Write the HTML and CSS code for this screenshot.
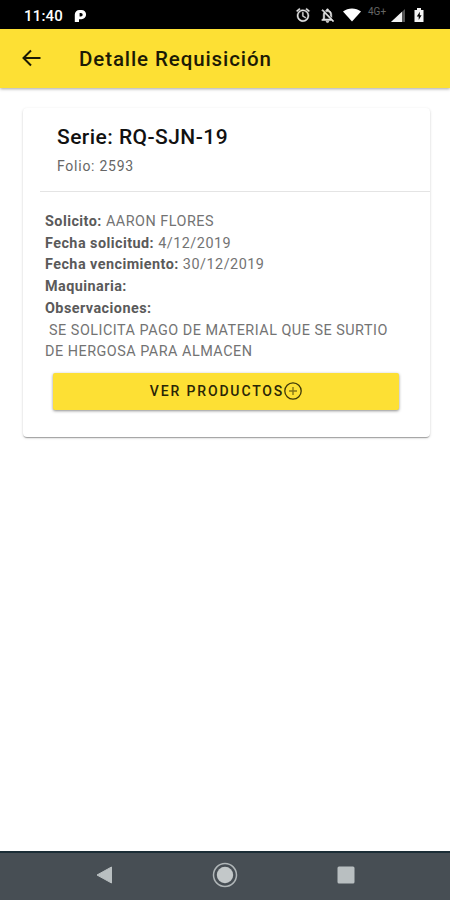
FILE: index.html
```html
<!DOCTYPE html>
<html lang="es">
<head>
  <meta charset="UTF-8" />
  <meta name="viewport" content="width=device-width, initial-scale=1.0" />
  <title>Detalle Requisición</title>
  <link rel="stylesheet" href="styles.css">
</head>
<body>
  <div class="statusbar">
    <span class="clock">11:40</span>
    <svg class="app-icon" width="13" height="14" viewBox="0 0 13 14">
      <path fill="#fff" fill-rule="evenodd" d="M5.500 1h2a4.600 4.600 0 0 1 0 9.200H5V13H.8V5.500A4.600 4.600 0 0 1 5.500 1zM5.600 4v3.600h1.300a1.800 1.800 0 0 0 0-3.600z"/>
    </svg>
    <div class="status-icons">
      <svg class="alarm" width="16" height="16" viewBox="0 0 24 24" fill="#e4e4e4" stroke="#e4e4e4" stroke-width=".6">
        <path d="M22 5.720l-4.600-3.860-1.290 1.530 4.600 3.860L22 5.720zM7.880 3.390 6.600 1.860 2 5.710l1.290 1.530 4.590-3.850zM12.500 8H11v6l4.750 2.850.75-1.230-4-2.370V8zM12 4c-4.970 0-9 4.030-9 9s4.020 9 9 9a9 9 0 1 0 0-18zm0 16c-3.870 0-7-3.130-7-7s3.130-7 7-7 7 3.130 7 7-3.130 7-7 7z"/>
      </svg>
      <svg class="bell" width="17" height="17" viewBox="0 0 24 24" fill="#e4e4e4" stroke="#e4e4e4" stroke-width=".8">
        <path d="M20 18.690 7.840 6.140 5.270 3.490 4 4.760l2.800 2.800v.01c-.52.990-.8 2.160-.8 3.420v5l-2 2v1h13.730l2 2L21 19.720l-1-1.030zM12 22c1.110 0 2-.89 2-2h-4c0 1.110.89 2 2 2zM8 17v-6c0-.7.100-1.300.3-1.900L16 17H8zm10-2.320V11c0-3.080-1.640-5.640-4.500-6.320V4a1.500 1.500 0 0 0-3 0v.68c-.6.140-1.150.36-1.640.64l1.500 1.500C13.600 5.500 16 8 16 11v1.680l2 2z"/>
      </svg>
      <svg class="wifi" width="18" height="14" viewBox="0 0 18 14">
        <path fill="#fff" d="M0 3.500C5.200-.6 12.800-.6 18 3.500L9 13.500z"/>
      </svg>
      <span class="network">4G+</span>
      <svg class="signal" width="14" height="13" viewBox="0 0 14 13">
        <path fill="#555" d="M0 13 14 0v13z"/>
        <path fill="#f2f2f2" d="M0 13 11 2.800V13z"/>
      </svg>
      <svg class="battery" width="10" height="14" viewBox="0 0 10 14">
        <path fill="#f5f5f5" d="M3 0h4v2h2.500v12h-9V2H3z"/>
        <path fill="#000" d="M5.800 3.800 2.800 8.500h1.900v3.400l2.900-4.700H5.800z"/>
      </svg>
    </div>
  </div>

  <div class="toolbar">
    <svg class="back" width="20" height="18" viewBox="0 0 20 18" fill="none" stroke="#1c1a05" stroke-width="2">
      <path d="M19.500 9H2.500M10 1.500 2.500 9l7.500 7.500"/>
    </svg>
    <h1 class="title">Detalle Requisición</h1>
  </div>

  <div class="content">
    <div class="card">
      <div class="card-header">
        <h2 class="serie">Serie: RQ-SJN-19</h2>
        <p class="folio">Folio: 2593</p>
      </div>
      <div class="card-body">
        <p><b>Solicito:</b> AARON FLORES</p>
        <p><b>Fecha solicitud:</b> 4/12/2019</p>
        <p><b>Fecha vencimiento:</b> 30/12/2019</p>
        <p><b>Maquinaria:</b></p>
        <p><b>Observaciones:</b></p>
        <p>&nbsp;SE SOLICITA PAGO DE MATERIAL QUE SE SURTIO<br>DE HERGOSA PARA ALMACEN</p>
        <button class="btn">
          <span>VER PRODUCTOS</span>
          <svg width="18" height="18" viewBox="0 0 18 18" fill="none" stroke="#3f3909">
            <circle cx="9" cy="9" r="8.200" stroke-width="1.300"/>
            <path stroke="#857718" stroke-width="1.400" d="M9 5v8M5 9h8"/>
          </svg>
        </button>
      </div>
    </div>
  </div>

  <div class="navbar">
    <svg width="17" height="18" viewBox="0 0 17 18">
      <path fill="#b9bfc1" stroke="#b9bfc1" stroke-linejoin="round" d="M1 9 15.500 1v16z"/>
    </svg>
    <svg width="26" height="26" viewBox="0 0 26 26">
      <circle cx="13" cy="13" r="11.500" fill="none" stroke="#b0b6b8" stroke-width="1.500"/>
      <circle cx="13" cy="13" r="8.200" fill="#c3c8c9"/>
    </svg>
    <svg width="18" height="18" viewBox="0 0 18 18">
      <rect x=".5" y=".5" width="17" height="17" rx="1.500" fill="#b9bfc1"/>
    </svg>
  </div>
</body>
</html>
```

FILE: styles.css
```css
* {
  box-sizing: border-box;
}

body {
  margin: 0;
  height: 900px;
  display: flex;
  flex-direction: column;
  font-family: Roboto, sans-serif;
  background-color: #fff;
}

h1, h2, p {
  margin: 0;
}

.statusbar {
  height: 29px;
  flex: none;
  display: flex;
  align-items: center;
  padding: 2px 26px 0 24px;
  background-color: #000;
  color: #fff;
}

.clock {
  width: 50px;
  font-size: 15px;
  font-weight: 500;
  letter-spacing: 0.2px;
}

.status-icons {
  display: flex;
  align-items: center;
  margin-left: auto;
}

.alarm, .bell {
  margin-top: -1px;
}

.bell {
  margin-left: 8px;
}

.wifi {
  margin-top: -2px;
  margin-left: 7px;
}

.network {
  width: 19px;
  margin: -7px 4px 0 7px;
  font-size: 10px;
  line-height: 12px;
  color: #666;
}

.battery {
  margin-top: -1px;
  margin-left: 9px;
}

.toolbar {
  height: 59px;
  flex: none;
  display: flex;
  align-items: center;
  padding-left: 21px;
  background-color: #fde034;
  box-shadow: 0 1px 3px rgba(0, 0, 0, 0.35);
}

.back {
  margin-top: -1px;
}

.title {
  margin-left: 38px;
  font-size: 20.500px;
  font-weight: 500;
  letter-spacing: 0.900px;
  color: #1c1a05;
}

.content {
  flex: 1;
  padding: 20px 20px 0 23px;
}

.card {
  height: 329px;
  border-radius: 4px;
  background-color: #fff;
  box-shadow: 0 2px 1px -1px rgba(0, 0, 0, 0.2), 0 1px 1px rgba(0, 0, 0, 0.12), 0 1px 3px rgba(0, 0, 0, 0.16);
}

.card-header {
  height: 84px;
  margin-left: 17px;
  padding: 17px 0 0 17px;
  border-bottom: 1px solid #e4e4e4;
}

.serie {
  font-size: 21px;
  font-weight: 500;
  line-height: 24px;
  letter-spacing: 0.450px;
  color: #111;
}

.folio {
  margin-top: 7px;
  font-size: 14px;
  line-height: 20px;
  letter-spacing: 0.750px;
  color: #666;
}

.card-body {
  padding: 19px 31px 0 22px;
  font-size: 14.400px;
  line-height: 21.700px;
  letter-spacing: 0.500px;
  color: #737373;
  white-space: nowrap;
}

.card-body b {
  font-weight: 700;
  letter-spacing: 0.450px;
  color: #5a5a5a;
}

.btn {
  width: 346px;
  height: 37px;
  display: flex;
  align-items: center;
  justify-content: center;
  margin: 10px 0 0 8px;
  padding: 0 0 1px;
  border: none;
  border-radius: 2px;
  background-color: #fde034;
  color: #2a2606;
  font-family: inherit;
  font-size: 14px;
  font-weight: 500;
  letter-spacing: 1.850px;
  box-shadow: 0 1px 3px rgba(0, 0, 0, 0.45);
}

.navbar {
  height: 49px;
  flex: none;
  display: flex;
  align-items: center;
  justify-content: center;
  gap: 99px;
  padding-bottom: 3px;
  border-top: 2px solid #1b2d36;
  background-color: #474e54;
}
```
